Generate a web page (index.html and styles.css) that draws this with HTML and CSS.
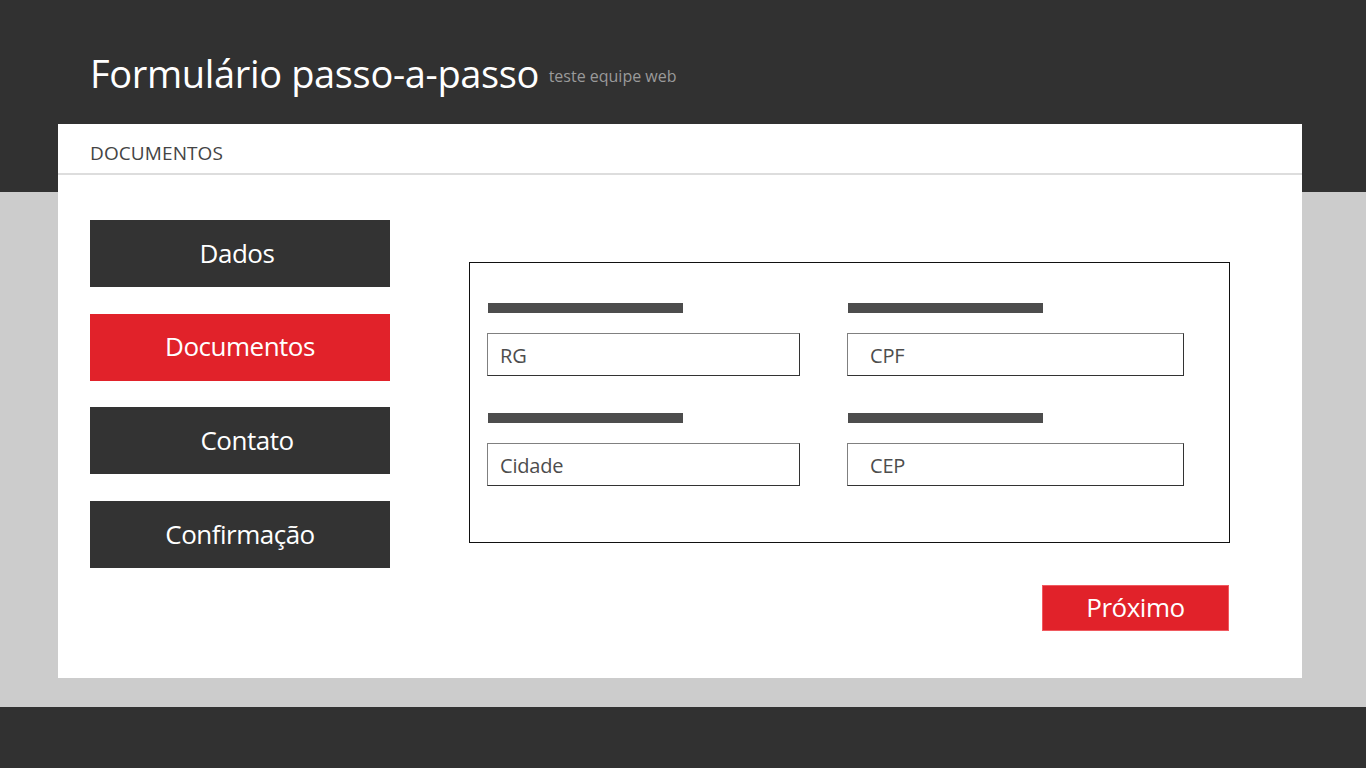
FILE: index.html
```html
<!DOCTYPE html>
<html lang="pt-BR">
<head>
<meta charset="utf-8">
<title>Formulário passo-a-passo</title>
<link rel="stylesheet" href="styles.css">
</head>
<body>
  <header class="top">
    <h1 class="title">Formulário passo-a-passo <small class="subtitle">teste equipe web</small></h1>
  </header>
  <main class="stage">
    <section class="card">
      <div class="card-head">DOCUMENTOS</div>
      <div class="card-body">
        <nav class="steps">
          <a class="step step-dados">Dados</a>
          <a class="step active">Documentos</a>
          <a class="step step-contato">Contato</a>
          <a class="step">Confirmação</a>
        </nav>
        <div class="content">
          <form class="form-box">
            <div class="field">
              <span class="label-bar"></span>
              <div class="input">RG</div>
            </div>
            <div class="field wide">
              <span class="label-bar"></span>
              <div class="input">CPF</div>
            </div>
            <div class="field">
              <span class="label-bar"></span>
              <div class="input">Cidade</div>
            </div>
            <div class="field wide">
              <span class="label-bar"></span>
              <div class="input">CEP</div>
            </div>
          </form>
          <div class="actions">
            <button class="next" type="button">Próximo</button>
          </div>
        </div>
      </div>
    </section>
  </main>
  <footer class="bottom"></footer>
</body>
</html>
```

FILE: styles.css
```css
* { box-sizing: border-box; }
html, body { margin: 0; padding: 0; }
body {
  font-family: "Open Sans", "Noto Sans", sans-serif;
  background: #cccccc;
  height: 768px;
  overflow: hidden;
  display: flex;
  flex-direction: column;
}
.top {
  background: #313131;
  height: 192px;
  padding: 47px 0 0 90px;
}
.title {
  margin: 0;
  font-weight: 400;
  font-size: 38px;
  line-height: 52px;
  color: #ffffff;
  letter-spacing: -0.35px;
}
.subtitle {
  font-size: 16px;
  color: #9a9a9a;
  letter-spacing: 0;
  vertical-align: 6px;
}
.stage {
  flex: 1;
  margin-top: -68px;
  padding: 0 64px 29px 58px;
}
.card {
  background: #ffffff;
  height: 554px;
  width: 1244px;
}
.card-head {
  height: 51px;
  padding: 16px 0 0 32px;
  font-size: 19px;
  color: #444444;
  border-bottom: 2px solid #dddddd;
  letter-spacing: 0.1px;
}
.card-body {
  display: grid;
  grid-template-columns: 300px 761px;
  column-gap: 79px;
  padding: 45px 0 0 32px;
}
.steps {
  display: flex;
  flex-direction: column;
  gap: 26.7px;
}
.step {
  height: 67px;
  background: #333333;
  color: #ffffff;
  font-size: 26px;
  letter-spacing: -0.5px;
  display: flex;
  align-items: center;
  justify-content: center;
  padding-bottom: 2px;
}
.step-dados { padding-right: 6px; }
.step-contato { padding-left: 14px; }
.step.active { background: #e1222a; }
.content { padding-top: 42px; }
.form-box {
  margin: 0;
  border: 1px solid #111111;
  height: 281px;
  padding: 40px 0 0 17px;
  display: grid;
  grid-template-columns: 313px 337px;
  column-gap: 47px;
  row-gap: 37px;
  align-content: start;
}
.field {
  display: flex;
  flex-direction: column;
  gap: 20px;
}
.label-bar {
  display: block;
  width: 195px;
  height: 10px;
  background: #4d4d4d;
  margin-left: 1px;
}
.input {
  height: 43px;
  border: 1px solid;
  border-color: #808080 #333333 #333333 #808080;
  font-size: 20px;
  color: #4d4d4d;
  padding: 8px 0 0 12px;
  letter-spacing: -0.2px;
}
.field.wide .input { padding-left: 22px; }
.actions {
  display: flex;
  justify-content: flex-end;
  padding: 42px 1px 0 0;
}
.next {
  width: 187px;
  height: 46px;
  background: #e1222a;
  border: 1px solid #f05a60;
  color: #ffffff;
  font-family: inherit;
  font-size: 26px;
  letter-spacing: -0.5px;
  padding: 0 0 2px;
}
.bottom {
  background: #313131;
  height: 61px;
}
```
